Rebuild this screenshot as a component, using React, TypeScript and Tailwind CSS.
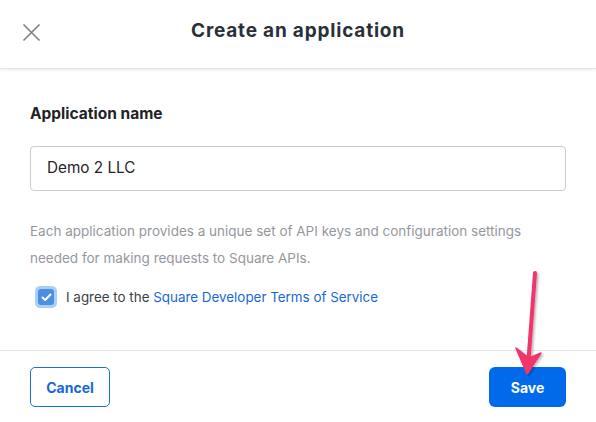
import React from "react";

export default function App() {
  return (
    <div className="relative w-[596px] h-[422px] bg-white overflow-hidden" style={{ fontFamily: "Inter, 'Noto Sans', sans-serif" }}>
      <div className="h-[69px] flex items-center relative border-b border-[#e1e3e5] shadow-[0_1px_3px_rgba(0,0,0,0.08)]">
        <button className="absolute left-[22px] top-[23px] w-[19px] h-[19px]">
          <svg width="19" height="19" viewBox="0 0 19 19">
            <path d="M1.5 1.5 L17.5 17.5 M17.5 1.5 L1.5 17.5" stroke="#7b7e82" strokeWidth="1.6" fill="none" />
          </svg>
        </button>
        <div className="w-full text-center text-[19px] font-bold text-[#2a3038] tracking-[0.8px] pb-[6px]">Create an application</div>
      </div>
      <div className="px-[30px] pt-[35px]">
        <div className="text-[15.5px] font-bold text-[#1f2328] leading-[20px]">Application name</div>
        <div className="mt-[22px] h-[45px] border border-[#c8ccd0] rounded-[4px] flex items-center px-[16px] text-[15.3px] text-[#1f2328]">Demo 2 LLC</div>
        <p className="mt-[27px] text-[13.5px] leading-[27px] text-[#94989d]">
          Each application provides a unique set of API keys and configuration settings<br />
          needed for making requests to Square APIs.
        </p>
        <div className="mt-[14px] flex items-center pl-[5px]">
          <div className="w-[22px] h-[22px] rounded-[5px] bg-[#a8d0f5] flex items-center justify-center">
            <div className="w-[16px] h-[16px] rounded-[3px] bg-[#4a8fe3] flex items-center justify-center">
              <svg width="11" height="9" viewBox="0 0 11 9">
                <path d="M1.5 4.5 L4.2 7 L9.5 1.5" stroke="white" strokeWidth="2" fill="none" strokeLinecap="round" strokeLinejoin="round" />
              </svg>
            </div>
          </div>
          <span className="ml-[9px] text-[13.4px] text-[#3a3e43]">
            I agree to the <span className="text-[#1768d6]">Square Developer Terms of Service</span>
          </span>
        </div>
      </div>
      <div className="absolute left-0 right-0 top-[350px] border-t border-[#e4e6e8]" />
      <div className="absolute left-[30px] right-[30px] top-[367px] flex justify-between">
        <button className="w-[80px] h-[40px] border border-[#1a6fe0] rounded-[5px] text-[14px] font-bold text-[#1768d6]">Cancel</button>
        <button className="w-[77px] h-[40px] bg-[#006aeb] rounded-[6px] text-[14px] font-bold text-white">Save</button>
      </div>
      <svg className="absolute left-0 top-0" width="596" height="422" viewBox="0 0 596 422" style={{ pointerEvents: "none" }}>
        <defs>
          <filter id="sh" x="-50%" y="-50%" width="200%" height="200%">
            <feDropShadow dx="1.5" dy="1.5" stdDeviation="1.2" floodColor="#000" floodOpacity="0.3" />
          </filter>
        </defs>
        <g filter="url(#sh)">
          <path d="M535 273 L528.5 360" stroke="#f2346b" strokeWidth="4" strokeLinecap="round" fill="none" />
          <path d="M516 348 L527 374 L541 353 L529 358 Z" fill="#f2346b" stroke="#f2346b" strokeWidth="1.5" strokeLinejoin="round" />
        </g>
      </svg>
    </div>
  );
}
